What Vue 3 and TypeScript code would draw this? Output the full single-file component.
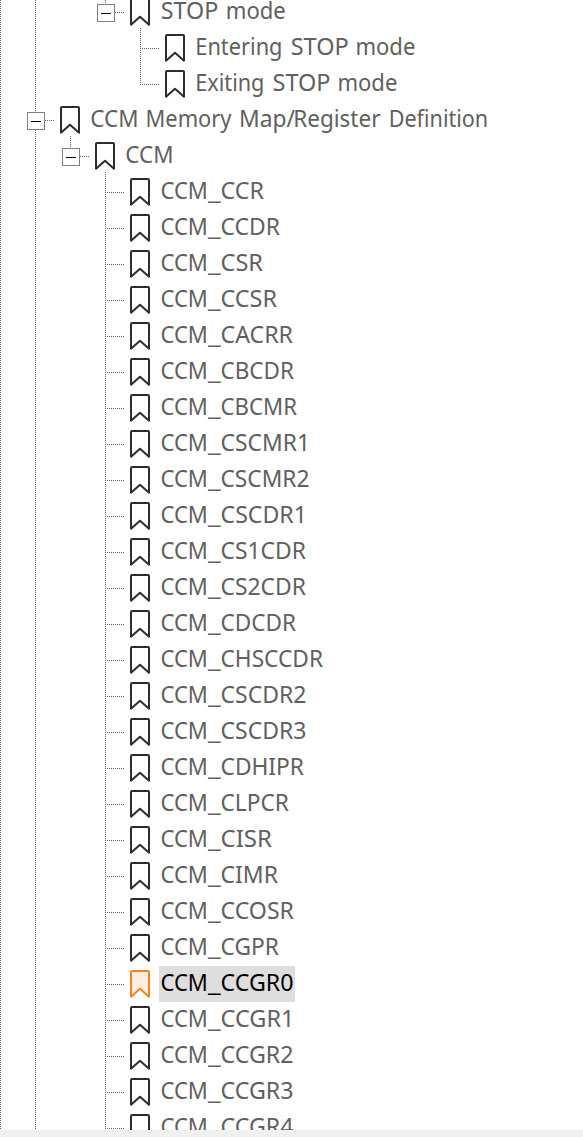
<script setup lang="ts">
interface Word {
  text: string
  x: number
  length: number
}

interface TreeRow {
  id: string
  words: Word[]
  depth: number
  guides: number[]
  width: number
  open?: boolean
  last?: boolean
  selected?: boolean
}

const word = (text: string, x: number, length: number): Word => ({ text, x, length })

const rows: TreeRow[] = [
  {
    id: 'stop', depth: 3, guides: [0, 1], width: 130, open: true, last: true,
    words: [word('STOP', 1.8, 57.5), word('mode', 66.8, 60)],
  },
  {
    id: 'entering', depth: 4, guides: [0, 1], width: 225,
    words: [word('Entering', 1.3, 87.2), word('STOP', 96.7, 58), word('mode', 161.4, 60)],
  },
  {
    id: 'exiting', depth: 4, guides: [0, 1], width: 208, last: true,
    words: [word('Exiting', 1.3, 69.1), word('STOP', 78.5, 58), word('mode', 143.4, 60)],
  },
  {
    id: 'map', depth: 1, guides: [0], width: 404, open: true,
    words: [
      word('CCM', 1.3, 48.2), word('Memory', 56.5, 86),
      word('Map/', 150, 56), word('Register', 204.2, 87.3), word('Definition', 299.7, 99.5),
    ],
  },
  { id: 'ccm', depth: 2, guides: [0, 1], width: 54, open: true, last: true, words: [word('CCM', 1.3, 48.2)] },
]

const registers: [string, number][] = [
  ['CCR', 43.5], ['CCDR', 59.5], ['CSR', 42.5], ['CCSR', 56.5], ['CACRR', 72.5],
  ['CBCDR', 73.5], ['CBCMR', 76.5], ['CSCMR1', 89.5], ['CSCMR2', 89], ['CSCDR1', 86.5],
  ['CS1CDR', 85.5], ['CS2CDR', 85.5], ['CDCDR', 75.5], ['CHSCCDR', 102.5], ['CSCDR2', 86],
  ['CSCDR3', 86], ['CDHIPR', 83.5], ['CLPCR', 68.5], ['CISR', 51.5], ['CIMR', 57.5],
  ['CCOSR', 73.5], ['CGPR', 58.5], ['CCGR0', 73], ['CCGR1', 74], ['CCGR2', 73],
  ['CCGR3', 73], ['CCGR4', 73],
]

for (const [name, length] of registers) {
  rows.push({
    id: name,
    depth: 3,
    guides: [0, 1],
    width: Math.round(length + 63),
    selected: name === 'CCGR0',
    words: [word('CCM', 1.4, 47.5), word('_', 48.9, 12.6), word(name, 61.5, length)],
  })
}

const separator = (row: TreeRow, i: number) =>
  i < row.words.length - 1 && row.depth + row.words.length > 0 && !row.id.startsWith('C') && row.words[i].text !== 'Map/' ? ' ' : ''
</script>

<template>
  <div class="panel">
    <ul class="tree">
      <li v-for="row in rows" :key="row.id" class="row" :class="{ selected: row.selected }">
        <svg class="branch" :width="row.depth * 35 + 54" height="36">
          <g class="dots">
            <path v-for="g in row.guides" :key="g" :d="`M${g * 35 + 0.5} 0V36`" />
            <path :d="`M${row.depth * 35 + 0.5} 0V${row.last ? 19 : 36}`" />
            <path :d="`M${row.depth * 35} 18.5h19`" />
            <path v-if="row.open" :d="`M${row.depth * 35 + 35.5} 34v2`" />
          </g>
          <g v-if="row.open" :transform="`translate(${row.depth * 35 - 8} 10)`">
            <rect class="box" x=".5" y=".5" width="17" height="17" />
            <path class="minus" d="M4 9.5h10" />
          </g>
          <path
            class="mark"
            :transform="`translate(${row.depth * 35 + 25} 4)`"
            d="M1 26.7V2Q1 1 2 1H18Q19 1 19 2V26.7L10 18.7Z"
          />
        </svg>
        <svg class="label" :width="row.width" height="36">
          <text y="25"><template v-for="(w, i) in row.words" :key="i"><tspan
            :x="w.x"
            :textLength="w.length"
            lengthAdjust="spacingAndGlyphs"
          >{{ w.text }}</tspan>{{ separator(row, i) }}</template></text>
        </svg>
      </li>
    </ul>
    <div class="scrollbar"></div>
  </div>
</template>

<style scoped>
.panel { height: 1137px; display: flex; flex-direction: column; background: #fff; overflow: hidden; }
.tree { flex: 1; min-height: 0; margin: -6px 0 0; padding: 0; list-style: none; overflow: hidden; }
.row { display: flex; height: 36px; }
.branch, .label { display: block; flex: none; }
.label { overflow: visible; }
.dots path { stroke: #666; stroke-width: 1; stroke-dasharray: 1 1; fill: none; shape-rendering: crispEdges; }
.box { fill: #fff; stroke: #808080; }
.minus { stroke: #000; shape-rendering: crispEdges; }
.mark { fill: #fff; stroke: #2d2d2d; stroke-width: 2; stroke-linejoin: round; }
.label text { font: 24px "Noto Sans", "Open Sans", sans-serif; fill: #606060; }
.selected .mark { fill: #ffede0; stroke: #f58220; }
.selected .label { background: #dedede; }
.selected text { fill: #000; }
.scrollbar { flex: none; height: 7px; background: #f0f0f0; }
</style>
<style>
body { overflow: hidden; }
</style>
